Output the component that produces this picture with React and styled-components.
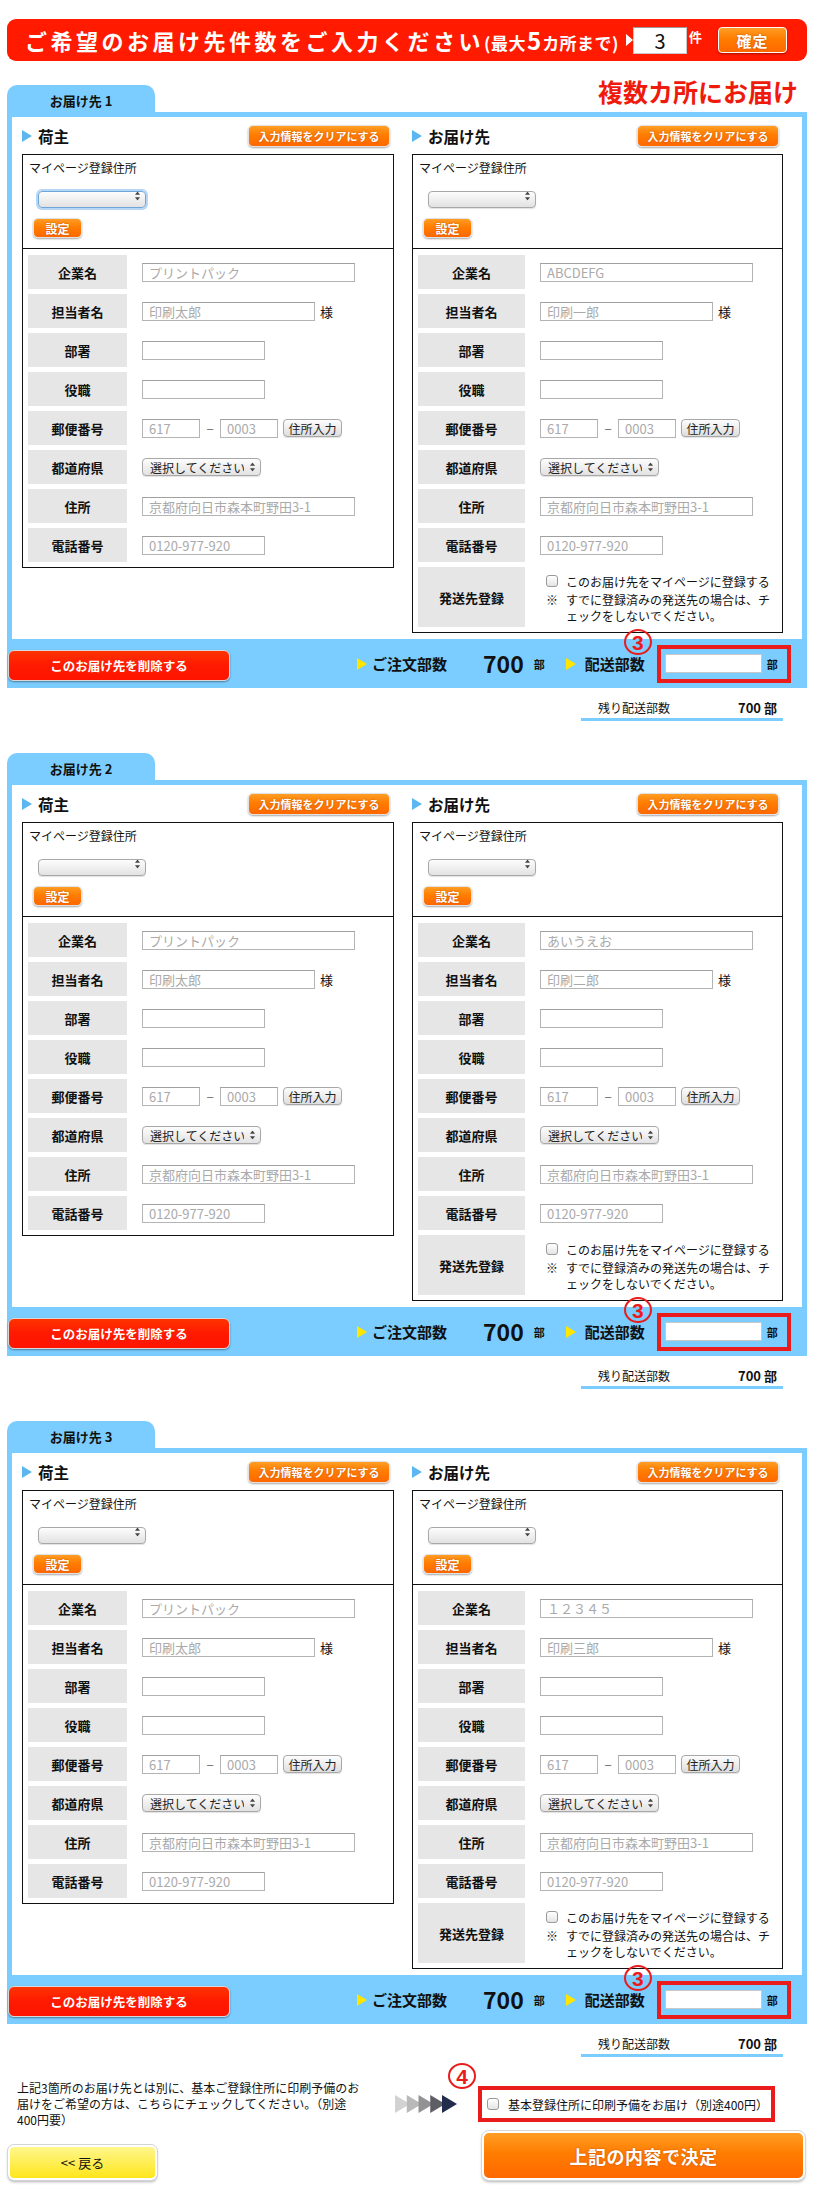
import React from "react";
import styled, { createGlobalStyle, css } from "styled-components";

const BLUE = "#7bcdff";
const RED = "#ff1a00";
const BOX_RED = "#ea1b1b";
const FONT = `"Noto Sans CJK JP", "Noto Sans", "Liberation Sans", sans-serif`;

const GlobalStyle = createGlobalStyle`
  *, *::before, *::after { box-sizing: border-box; }
  html, body { margin: 0; padding: 0; background: #fff; }
  body { font-family: ${FONT}; color: #111; }
  input, select, button, textarea { font-family: ${FONT}; }
`;

const Page = styled.div`
  width: 816px;
  padding: 19px 9px 27px 7px;
`;

/* ---------- header ---------- */
const HeaderBar = styled.header`
  height: 42px;
  border-radius: 9px;
  background: ${RED};
  display: flex;
  align-items: center;
  justify-content: space-between;
  padding: 0 20px 0 18px;
`;

const HeaderTitle = styled.h1`
  margin: 0;
  flex: none;
  color: #fff;
  font-size: 22px;
  font-weight: 700;
  letter-spacing: 3.5px;
  line-height: 1;
  white-space: nowrap;
`;

const HeaderNote = styled.span`
  font-size: 17px;
  letter-spacing: 0.5px;
`;

const HeaderNum = styled.span`
  font-size: 24px;
  letter-spacing: 0;
  margin: 0 1px;
`;

const CountBox = styled.div`
  display: flex;
  align-items: center;
  flex: none;
`;

const Pointer = styled.span`
  width: 0;
  height: 0;
  border-top: 6px solid transparent;
  border-bottom: 6px solid transparent;
  border-left: 7px solid #fff;
`;

const CountInput = styled.input`
  width: 54px;
  height: 27px;
  border: 1px solid #c8c8c8;
  border-top-color: #9a9a9a;
  background: #fff;
  font-size: 20px;
  text-align: center;
  padding: 0;
  color: #111;
  outline: none;
`;

const CountUnit = styled.span`
  color: #fff;
  font-size: 13px;
  font-weight: 700;
  margin: 0 16px 8px 2px;
`;

const orangeSkin = css`
  background: linear-gradient(180deg, #ff9d24 0%, #ff7d00 45%, #ff6800 100%);
  color: #fff;
  font-weight: 700;
  border: 1px solid #e2e2e2;
  box-shadow: 0 1px 2px rgba(0, 0, 0, 0.35);
  text-shadow: 0 0 2px rgba(150, 50, 0, 0.6);
  cursor: pointer;
  padding: 0;
  white-space: nowrap;
`;

const ConfirmButton = styled.button`
  ${orangeSkin};
  width: 69px;
  height: 26px;
  border-radius: 4px;
  border-color: #fff;
  font-size: 15px;
  letter-spacing: 1px;
`;

/* ---------- sections ---------- */
const Sections = styled.div`
  margin-top: 24px;
  display: flex;
  flex-direction: column;
  gap: 32px;
`;

const TabRow = styled.div`
  display: flex;
  justify-content: space-between;
  align-items: flex-end;
  height: 27px;
`;

const Tab = styled.div`
  width: 148px;
  height: 27px;
  background: ${BLUE};
  border-radius: 10px 10px 0 0;
  display: flex;
  align-items: center;
  justify-content: center;
  padding-top: 3px;
  font-size: 13px;
  font-weight: 700;
  color: #111;
`;

const BigTitle = styled.h2`
  margin: 0 9px 6px 0;
  color: #ee1b0c;
  font-size: 25px;
  line-height: 30px;
  font-weight: 700;
  white-space: nowrap;
`;

const Panel = styled.div`
  background: ${BLUE};
  display: flex;
  flex-direction: column;
`;

const PanelBody = styled.div`
  margin: 5px 5px 0;
  background: #fff;
  display: grid;
  grid-template-columns: 372px 371px;
  column-gap: 18px;
  align-items: start;
  padding: 8px 0 6px 10px;
`;

const Column = styled.div`
  display: flex;
  flex-direction: column;
`;

const ColumnHead = styled.div`
  height: 22px;
  margin-bottom: 7px;
  padding-right: 4px;
  display: flex;
  align-items: center;
  justify-content: space-between;
`;

const ColumnTitle = styled.h3`
  margin: 0;
  display: flex;
  align-items: center;
  gap: 6px;
  font-size: 15.5px;
  font-weight: 700;
  color: #111;
`;

const Triangle = styled.span`
  width: 0;
  height: 0;
  border-top: ${(p) => p.$h / 2}px solid transparent;
  border-bottom: ${(p) => p.$h / 2}px solid transparent;
  border-left: ${(p) => p.$w}px solid ${(p) => p.$color};
  flex: none;
`;

const ClearButton = styled.button`
  ${orangeSkin};
  width: 142px;
  height: 22px;
  border-radius: 5px;
  font-size: 11px;
`;

const FormBox = styled.div`
  border: 1px solid #111;
  background: #fff;
`;

const MyPageArea = styled.div`
  padding: 4px 0 10px 6px;
  border-bottom: 1px solid #111;
  display: flex;
  flex-direction: column;
  align-items: flex-start;
`;

const MyPageLabel = styled.div`
  font-size: 12px;
  line-height: 18px;
  color: #111;
`;

const SetButton = styled.button`
  ${orangeSkin};
  width: 49px;
  height: 20px;
  border-radius: 5px;
  font-size: 12px;
  margin: 14px 0 0 4px;
`;

const Rows = styled.div`
  padding: 6px 5px 5px;
  display: flex;
  flex-direction: column;
  gap: 5px;
`;

const Row = styled.div`
  display: grid;
  grid-template-columns: ${(p) => p.$labelW}px 1fr;
  column-gap: 15px;
  min-height: ${(p) => (p.$tall ? 60 : 34)}px;
`;

const LabelCell = styled.div`
  background: #e6e6e6;
  display: flex;
  align-items: center;
  justify-content: center;
  font-size: 13px;
  font-weight: 700;
  color: #111;
`;

const ValueCell = styled.div`
  display: flex;
  align-items: center;
  font-size: 13px;
`;

const TextInput = styled.input`
  width: ${(p) => p.$w}px;
  height: 19px;
  border: 1px solid #b4b4b4;
  border-top-color: #a0a0a0;
  padding: 0 6px;
  font-size: 13px;
  color: #333;
  background: #fff;
  outline: none;
  &::placeholder {
    color: #aaa;
  }
`;

const Suffix = styled.span`
  margin-left: 5px;
  font-size: 13px;
  color: #111;
`;

const Dash = styled.span`
  width: 20px;
  text-align: center;
  color: #777;
  font-size: 13px;
`;

const GrayButton = styled.button`
  margin-left: 5px;
  width: 59px;
  height: 18px;
  border: 1px solid #a8a8a8;
  border-radius: 4px;
  background: linear-gradient(#fdfdfd, #dedede);
  font-size: 12px;
  color: #222;
  padding: 0;
  box-shadow: 0 1px 1px rgba(0, 0, 0, 0.12);
`;

const SelectWrap = styled.div`
  position: relative;
  width: ${(p) => p.$w}px;
  height: ${(p) => p.$h}px;
  margin: ${(p) => p.$m || "0"};
`;

const SelectEl = styled.select`
  appearance: none;
  -webkit-appearance: none;
  width: 100%;
  height: 100%;
  border: 1px solid ${(p) => (p.$focus ? "#6ea6d8" : "#a8a8a8")};
  border-radius: 4px;
  background: linear-gradient(#fdfdfd, #e2e2e2);
  box-shadow: ${(p) =>
    p.$focus ? "0 0 0 2px #b5d6f4" : "0 1px 1px rgba(0,0,0,0.12)"};
  font-size: 12px;
  color: #222;
  padding: 0 16px 0 7px;
  outline: none;
`;

const SelectArrows = styled.svg`
  position: absolute;
  right: 6px;
  top: 50%;
  transform: translateY(-50%);
  pointer-events: none;
`;

const RegisterCell = styled.div`
  padding: 5px 0 0 6px;
  font-size: 12px;
  color: #111;
  align-self: start;
`;

const CheckLine = styled.label`
  display: flex;
  align-items: center;
  gap: 8px;
  height: 18px;
`;

const Checkbox = styled.input.attrs({ type: "checkbox" })`
  appearance: none;
  -webkit-appearance: none;
  width: 12px;
  height: 12px;
  margin: 0;
  border: 1px solid #9a9a9a;
  border-radius: 3px;
  background: linear-gradient(#fff, #e4e4e4);
  flex: none;
`;

const Note = styled.div`
  display: flex;
  margin-top: 2px;
  line-height: 16px;
`;

const NoteMark = styled.span`
  width: 20px;
  flex: none;
`;

const NoteText = styled.span`
  width: 210px;
`;

/* ---------- summary bar ---------- */
const Bar = styled.div`
  height: 49px;
  display: flex;
  align-items: center;
  padding-left: 1px;
`;

const DeleteButton = styled.button`
  width: 222px;
  height: 31px;
  border-radius: 6px;
  border: 1px solid #d8d8d8;
  background: linear-gradient(#ff3300, #ff1a00 50%, #ff1400);
  color: #fff;
  font-size: 12.5px;
  font-weight: 700;
  box-shadow: 0 1px 2px rgba(0, 0, 0, 0.4);
  padding: 0;
  margin-top: 3px;
`;

const BarLabel = styled.span`
  display: flex;
  align-items: center;
  gap: 5px;
  margin-left: ${(p) => p.$ml}px;
  font-size: 15px;
  font-weight: 700;
  color: #111;
  white-space: nowrap;
`;

const BigCount = styled.span`
  margin-left: 36px;
  font-size: 23px;
  font-weight: 700;
  color: #111;
  line-height: 1;
`;

const SmallUnit = styled.span`
  margin-left: ${(p) => p.$ml || 10}px;
  font-size: 11px;
  font-weight: 700;
  color: #111;
`;

const HighlightBox = styled.div`
  position: relative;
  border: 4px solid ${BOX_RED};
  display: flex;
  align-items: center;
  width: ${(p) => p.$w}px;
  height: ${(p) => p.$h}px;
  margin-left: ${(p) => p.$ml || 0}px;
  padding-left: ${(p) => p.$pl || 0}px;
`;

const CircleNum = styled.span`
  position: absolute;
  left: ${(p) => p.$x}px;
  top: ${(p) => p.$y}px;
  width: 28px;
  height: 26px;
  border: 2px solid ${BOX_RED};
  border-radius: 50%;
  color: ${BOX_RED};
  display: flex;
  align-items: center;
  justify-content: center;
  font-family: "Liberation Sans", sans-serif;
  font-size: 21px;
  font-weight: 700;
  line-height: 1;
  padding-top: 1px;
`;

const QtyInput = styled.input`
  width: 97px;
  height: 19px;
  border: 1px solid #c8c8c8;
  background: #fff;
  outline: none;
`;

const RemainRow = styled.div`
  margin: 8px 24px 0 auto;
  width: 202px;
  height: 25px;
  border-bottom: 3px solid ${BLUE};
  display: flex;
  align-items: center;
  justify-content: space-between;
  padding: 0 6px 0 17px;
  font-size: 12px;
  color: #111;
`;

const RemainValue = styled.span`
  font-size: 13px;
  font-weight: 700;
`;

/* ---------- bottom ---------- */
const OptionRow = styled.div`
  display: flex;
  align-items: center;
  margin-top: 23px;
  padding-left: 10px;
`;

const OptionText = styled.p`
  width: 346px;
  margin: 0;
  font-size: 12px;
  line-height: 16px;
  color: #111;
`;

const ArrowsSvg = styled.svg`
  margin-left: 32px;
  flex: none;
`;

const OptionLabel = styled.label`
  display: flex;
  align-items: center;
  gap: 9px;
  font-size: 12px;
  color: #111;
  white-space: nowrap;
`;

const ActionRow = styled.div`
  display: flex;
  justify-content: space-between;
  align-items: flex-end;
  margin-top: 3px;
  padding: 0 2px 0 1px;
`;

const BackButton = styled.button`
  width: 149px;
  height: 35px;
  border-radius: 6px;
  border: 2px solid #fff;
  outline: 1px solid #d4d4d4;
  background: linear-gradient(#fff68c, #ffee55 50%, #ffe61a);
  box-shadow: 0 2px 3px rgba(0, 0, 0, 0.3);
  font-size: 13px;
  color: #111;
  padding: 0;
`;

const SubmitButton = styled.button`
  ${orangeSkin};
  width: 323px;
  height: 49px;
  border-radius: 7px;
  border: 2px solid #fff;
  outline: 1px solid #d8d8d8;
  box-shadow: 0 2px 3px rgba(0, 0, 0, 0.3);
  font-size: 18px;
  letter-spacing: 0.5px;
`;

/* ---------- parts ---------- */
function Select({ w, h, m, focus, text }) {
  return (
    <SelectWrap $w={w} $h={h} $m={m}>
      <SelectEl $focus={focus} defaultValue="">
        <option value="">{text}</option>
      </SelectEl>
      <SelectArrows width="5" height="9" viewBox="0 0 5 9">
        <path d="M2.5 0 L5 3.3 L0 3.3 Z" fill="#444" />
        <path d="M2.5 9 L5 5.7 L0 5.7 Z" fill="#444" />
      </SelectArrows>
    </SelectWrap>
  );
}

function AddressColumn({ title, labelW, company, person, register, focus }) {
  return (
    <Column>
      <ColumnHead>
        <ColumnTitle>
          <Triangle $w={10} $h={12} $color="#5cb6ef" />
          {title}
        </ColumnTitle>
        <ClearButton>入力情報をクリアにする</ClearButton>
      </ColumnHead>
      <FormBox>
        <MyPageArea>
          <MyPageLabel>マイページ登録住所</MyPageLabel>
          <Select w={108} h={17} m="10px 0 0 9px" focus={focus} text="" />
          <SetButton>設定</SetButton>
        </MyPageArea>
        <Rows>
          <Row $labelW={labelW}>
            <LabelCell>企業名</LabelCell>
            <ValueCell>
              <TextInput $w={213} placeholder={company} />
            </ValueCell>
          </Row>
          <Row $labelW={labelW}>
            <LabelCell>担当者名</LabelCell>
            <ValueCell>
              <TextInput $w={173} placeholder={person} />
              <Suffix>様</Suffix>
            </ValueCell>
          </Row>
          <Row $labelW={labelW}>
            <LabelCell>部署</LabelCell>
            <ValueCell>
              <TextInput $w={123} />
            </ValueCell>
          </Row>
          <Row $labelW={labelW}>
            <LabelCell>役職</LabelCell>
            <ValueCell>
              <TextInput $w={123} />
            </ValueCell>
          </Row>
          <Row $labelW={labelW}>
            <LabelCell>郵便番号</LabelCell>
            <ValueCell>
              <TextInput $w={58} placeholder="617" />
              <Dash>−</Dash>
              <TextInput $w={58} placeholder="0003" />
              <GrayButton>住所入力</GrayButton>
            </ValueCell>
          </Row>
          <Row $labelW={labelW}>
            <LabelCell>都道府県</LabelCell>
            <ValueCell>
              <Select w={119} h={18} text="選択してください" />
            </ValueCell>
          </Row>
          <Row $labelW={labelW}>
            <LabelCell>住所</LabelCell>
            <ValueCell>
              <TextInput $w={213} placeholder="京都府向日市森本町野田3-1" />
            </ValueCell>
          </Row>
          <Row $labelW={labelW}>
            <LabelCell>電話番号</LabelCell>
            <ValueCell>
              <TextInput $w={123} placeholder="0120-977-920" />
            </ValueCell>
          </Row>
          {register && (
            <Row $labelW={labelW} $tall>
              <LabelCell>発送先登録</LabelCell>
              <RegisterCell>
                <CheckLine>
                  <Checkbox />
                  このお届け先をマイページに登録する
                </CheckLine>
                <Note>
                  <NoteMark>※</NoteMark>
                  <NoteText>
                    すでに登録済みの発送先の場合は、チェックをしないでください。
                  </NoteText>
                </Note>
              </RegisterCell>
            </Row>
          )}
        </Rows>
      </FormBox>
    </Column>
  );
}

function DeliverySection({ no, company, person, first }) {
  return (
    <section>
      <TabRow>
        <Tab>お届け先 {no}</Tab>
        {first && <BigTitle>複数カ所にお届け</BigTitle>}
      </TabRow>
      <Panel>
        <PanelBody>
          <AddressColumn
            title="荷主"
            labelW={99}
            company="プリントパック"
            person="印刷太郎"
            focus={first}
          />
          <AddressColumn
            title="お届け先"
            labelW={107}
            company={company}
            person={person}
            register
          />
        </PanelBody>
        <Bar>
          <DeleteButton>このお届け先を削除する</DeleteButton>
          <BarLabel $ml={127}>
            <Triangle $w={10} $h={12} $color="#ffe600" />
            ご注文部数
          </BarLabel>
          <BigCount>700</BigCount>
          <SmallUnit>部</SmallUnit>
          <BarLabel $ml={21}>
            <Triangle $w={10} $h={12} $color="#ffe600" />
            <span style={{ marginLeft: 4 }}>配送部数</span>
          </BarLabel>
          <HighlightBox $w={134} $h={38} $ml={12} $pl={4}>
            <CircleNum $x={-37} $y={-20}>3</CircleNum>
            <QtyInput />
            <SmallUnit $ml={5}>部</SmallUnit>
          </HighlightBox>
        </Bar>
      </Panel>
      <RemainRow>
        <span>残り配送部数</span>
        <RemainValue>700 部</RemainValue>
      </RemainRow>
    </section>
  );
}

const sections = [
  { no: 1, company: "ABCDEFG", person: "印刷一郎" },
  { no: 2, company: "あいうえお", person: "印刷二郎" },
  { no: 3, company: "１２３４５", person: "印刷三郎" },
];

const arrowColors = ["#d2d2d2", "#b9b9b9", "#929292", "#5e5e66", "#222c4c"];

export default function App() {
  return (
    <Page>
      <GlobalStyle />
      <HeaderBar>
        <HeaderTitle>
          ご希望のお届け先件数をご入力ください
          <HeaderNote>
            (最大<HeaderNum>5</HeaderNum>カ所まで)
          </HeaderNote>
        </HeaderTitle>
        <CountBox>
          <Pointer />
          <CountInput defaultValue="3" />
          <CountUnit>件</CountUnit>
          <ConfirmButton>確定</ConfirmButton>
        </CountBox>
      </HeaderBar>

      <Sections>
        {sections.map((s, i) => (
          <DeliverySection key={s.no} {...s} first={i === 0} />
        ))}
      </Sections>

      <OptionRow>
        <OptionText>
          上記3箇所のお届け先とは別に、基本ご登録住所に印刷予備のお届けをご希望の方は、こちらにチェックしてください。（別途400円要）
        </OptionText>
        <ArrowsSvg width="62" height="18" viewBox="0 0 62 18">
          {arrowColors.map((c, i) => (
            <path
              key={c}
              d={`M${i * 11.75} 0 L${i * 11.75 + 15} 9 L${i * 11.75} 18 Z`}
              fill={c}
            />
          ))}
        </ArrowsSvg>
        <HighlightBox $w={297} $h={36} $ml={21} $pl={5}>
          <CircleNum $x={-34} $y={-27}>4</CircleNum>
          <OptionLabel>
            <Checkbox />
            基本登録住所に印刷予備をお届け（別途400円）
          </OptionLabel>
        </HighlightBox>
      </OptionRow>

      <ActionRow>
        <BackButton>&lt;&lt; 戻る</BackButton>
        <SubmitButton>上記の内容で決定</SubmitButton>
      </ActionRow>
    </Page>
  );
}
